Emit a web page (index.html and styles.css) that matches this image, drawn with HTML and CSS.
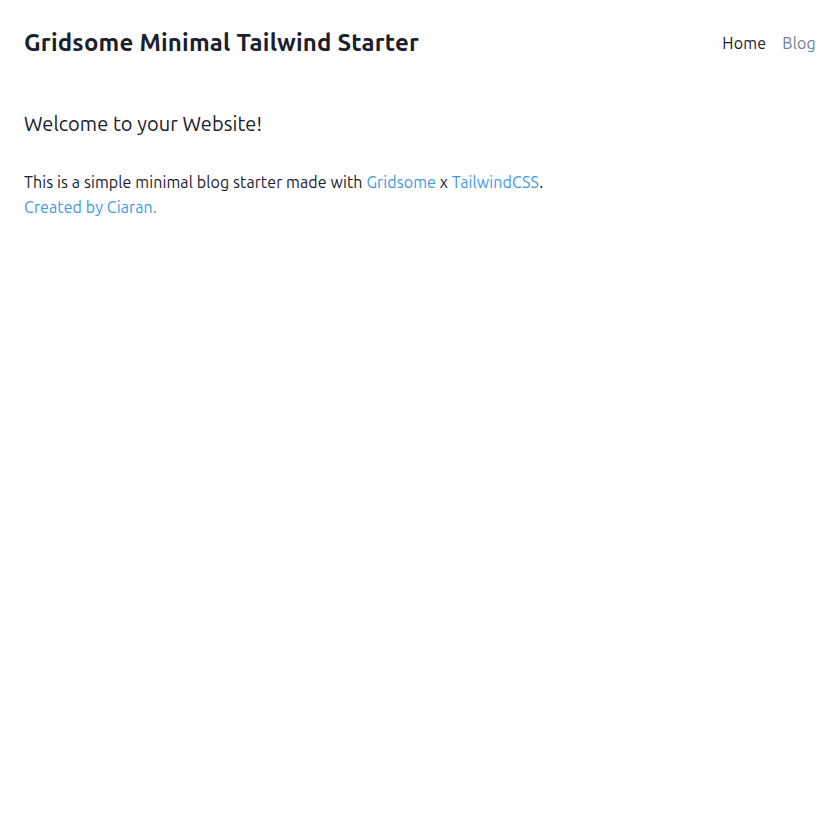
FILE: index.html
```html
<!DOCTYPE html>
<html>
<head>
<meta charset="utf-8">
<link rel="stylesheet" href="styles.css">
</head>
<body>
<div class="layout">
  <header class="header">
    <strong class="title">Gridsome Minimal Tailwind Starter</strong>
    <nav class="nav">
      <a class="nav-link active" href="#">Home</a>
      <a class="nav-link" href="#">Blog</a>
    </nav>
  </header>
  <main class="main">
    <h1 class="welcome">Welcome to your Website!</h1>
    <p class="intro">This is a simple minimal blog starter made with <a class="link" href="#">Gridsome</a> x <a class="link" href="#">TailwindCSS</a>.<br><a class="link" href="#">Created by Ciaran.</a></p>
  </main>
</div>
</body>
</html>
```
FILE: styles.css
```css
html, body {
  margin: 0;
  padding: 0;
  background: #fff;
}
body {
  font-family: "Ubuntu", system-ui, "Noto Sans", sans-serif;
  color: #1a202c;
  font-size: 16px;
  line-height: 1.5;
}
.layout {
  padding: 0 24px 0 24px;
}
.header {
  display: flex;
  justify-content: space-between;
  align-items: center;
  padding-top: 27px;
  height: 32px;
}
.title {
  font-size: 24px;
  line-height: 32px;
  font-weight: 700;
  letter-spacing: 0.21px;
}
.nav {
  display: flex;
  gap: 16px;
  margin-right: 0;
  letter-spacing: 0.2px;
}
.nav-link {
  color: #718096;
  text-decoration: none;
}
.nav-link.active {
  color: #1a202c;
}
.main {
  padding-top: 51px;
}
.welcome {
  margin: 0;
  font-size: 20px;
  line-height: 28px;
  font-weight: 400;
  letter-spacing: 0.08px;
}
.intro {
  margin: 32px 0 0 0;
  line-height: 25px;
  letter-spacing: 0.1px;
}
.link {
  color: #4299e1;
  text-decoration: none;
}
```
